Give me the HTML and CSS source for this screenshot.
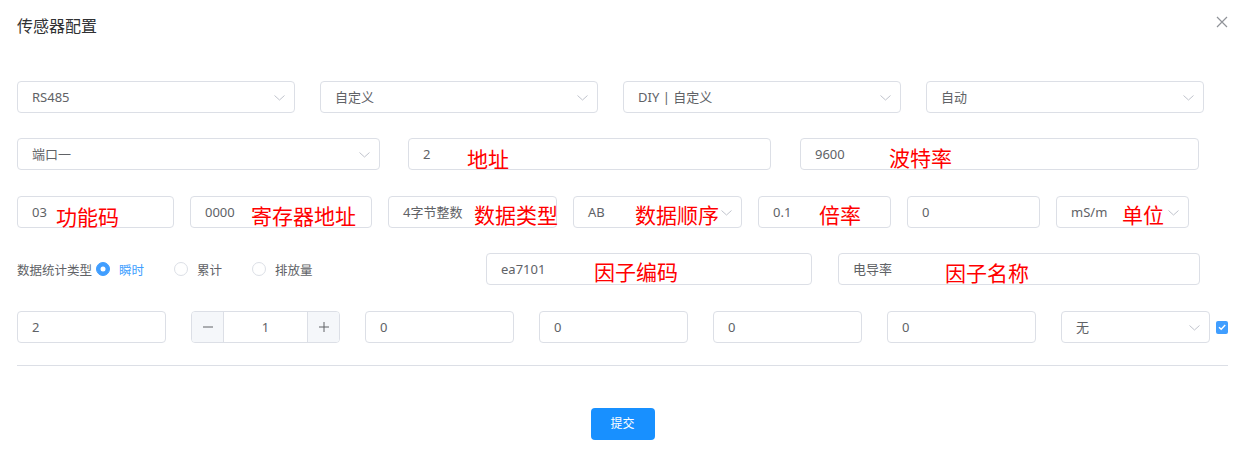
FILE: index.html
```html
<!DOCTYPE html>
<html lang="zh-CN">

<head>
    <meta charset="UTF-8">
    <meta name="viewport" content="width=device-width, initial-scale=1.0">
    <title>传感器配置</title>
    <link rel="stylesheet" href="styles.css">
</head>

<body>
    <div class="dialog">
        <div class="dialog-header">
            <span class="dialog-title">传感器配置</span>
            <span class="dialog-close">
                <svg width="12" height="12" viewBox="0 0 12 12"><path d="M1 1L11 11M11 1L1 11" stroke="#909399" stroke-width="1.2" fill="none"/></svg>
            </span>
        </div>

        <div class="dialog-body">
            <!-- 协议 / 设备 -->
            <div class="row row-1">
                <div class="field select"><span class="field-text">RS485</span><svg class="arrow" viewBox="0 0 11 6"><path d="M0.5 0.5L5.5 5L10.5 0.5"/></svg></div>
                <div class="field select"><span class="field-text">自定义</span><svg class="arrow" viewBox="0 0 11 6"><path d="M0.5 0.5L5.5 5L10.5 0.5"/></svg></div>
                <div class="field select"><span class="field-text">DIY | 自定义</span><svg class="arrow" viewBox="0 0 11 6"><path d="M0.5 0.5L5.5 5L10.5 0.5"/></svg></div>
                <div class="field select"><span class="field-text">自动</span><svg class="arrow" viewBox="0 0 11 6"><path d="M0.5 0.5L5.5 5L10.5 0.5"/></svg></div>
            </div>

            <!-- 端口 地址 波特率 -->
            <div class="row row-2">
                <div class="field select w-port"><span class="field-text">端口一</span><svg class="arrow" viewBox="0 0 11 6"><path d="M0.5 0.5L5.5 5L10.5 0.5"/></svg></div>
                <div class="field w-addr"><span class="field-text">2</span><span class="note n-addr">地址</span></div>
                <div class="field w-baud"><span class="field-text">9600</span><span class="note n-baud">波特率</span></div>
            </div>

            <!-- 功能码 寄存器 ... -->
            <div class="row row-3">
                <div class="field w-func"><span class="field-text">03</span><span class="note n-func">功能码</span></div>
                <div class="field w-reg"><span class="field-text">0000</span><span class="note n-reg">寄存器地址</span></div>
                <div class="field select w-type"><span class="field-text">4字节整数</span><span class="note n-type">数据类型</span></div>
                <div class="field select w-type"><span class="field-text">AB</span><span class="note n-order">数据顺序</span><svg class="arrow" viewBox="0 0 11 6"><path d="M0.5 0.5L5.5 5L10.5 0.5"/></svg></div>
                <div class="field w-sm"><span class="field-text">0.1</span><span class="note n-rate">倍率</span></div>
                <div class="field w-sm"><span class="field-text">0</span></div>
                <div class="field select w-sm"><span class="field-text">mS/m</span><span class="note n-unit">单位</span><svg class="arrow" viewBox="0 0 11 6"><path d="M0.5 0.5L5.5 5L10.5 0.5"/></svg></div>
            </div>

            <!-- 统计类型 因子 -->
            <div class="row row-4">
                <div class="radio-group">
                    <span class="radio-title">数据统计类型</span>
                    <label class="radio checked"><span class="radio-dot"></span><span class="radio-label">瞬时</span></label>
                    <label class="radio"><span class="radio-dot"></span><span class="radio-label">累计</span></label>
                    <label class="radio"><span class="radio-dot"></span><span class="radio-label">排放量</span></label>
                </div>
                <div class="field w-code"><span class="field-text">ea7101</span><span class="note n-code">因子编码</span></div>
                <div class="field w-name"><span class="field-text">电导率</span><span class="note n-name">因子名称</span></div>
            </div>

            <div class="row row-5">
                <div class="field w-num"><span class="field-text">2</span></div>
                <div class="stepper">
                    <span class="step-btn minus">
                        <svg width="12" height="12" viewBox="0 0 12 12"><path d="M1 6H11" stroke="#606266" stroke-width="1"/></svg>
                    </span>
                    <span class="step-value">1</span>
                    <span class="step-btn plus">
                        <svg width="12" height="12" viewBox="0 0 12 12"><path d="M1 6H11M6 1V11" stroke="#606266" stroke-width="1"/></svg>
                    </span>
                </div>
                <div class="field w-num"><span class="field-text">0</span></div>
                <div class="field w-num"><span class="field-text">0</span></div>
                <div class="field w-num"><span class="field-text">0</span></div>
                <div class="field w-num"><span class="field-text">0</span></div>
                <div class="field select w-num"><span class="field-text">无</span><svg class="arrow" viewBox="0 0 11 6"><path d="M0.5 0.5L5.5 5L10.5 0.5"/></svg></div>
                <span class="checkbox">
                    <svg width="10" height="10" viewBox="0 0 10 10"><path d="M2 5.2L4.2 7.3L8.2 3" stroke="#fff" stroke-width="1.4" fill="none"/></svg>
                </span>
            </div>
        </div>

        <div class="divider"></div>

        <div class="dialog-footer">
            <a href="javascript:;" class="btn-primary">提交</a>
        </div>
    </div>
</body>

</html>
```

FILE: styles.css
```css
* {
    margin: 0;
    padding: 0;
    box-sizing: border-box;
}

body {
    background-color: #fff;
    font-family: "Noto Sans", "Noto Sans CJK SC", sans-serif;
    font-size: 13px;
    color: #606266;
}

a {
    text-decoration: none;
}

.dialog {
    width: 1240px;
    height: 452px;
    padding: 0 12px 0 17px;
}

.dialog-header {
    display: flex;
    justify-content: space-between;
    padding-top: 14px;
    height: 81px;
}

.dialog-title {
    font-size: 16px;
    line-height: 24px;
    color: #303133;
}

.dialog-close {
    width: 12px;
    height: 12px;
    margin-top: 2px;
    display: flex;
}

.row {
    display: flex;
    align-items: center;
    height: 32px;
}

.row-1 {
    gap: 25px;
    margin-bottom: 25px;
}

.row-2 {
    margin-bottom: 26px;
}

.row-3 {
    gap: 16px;
    margin-bottom: 25px;
}

.row-4 {
    margin-bottom: 26px;
}

.row-5 {
    gap: 25px;
}

/* 输入框 */
.field {
    position: relative;
    flex: none;
    width: 278px;
    height: 32px;
    border: 1px solid #dcdfe6;
    border-radius: 4px;
    display: flex;
    align-items: center;
    padding: 0 14px;
    background-color: #fff;
    line-height: 30px;
    white-space: nowrap;
}

.field-text {
    color: #606266;
}

.arrow {
    position: absolute;
    right: 9px;
    top: 13px;
    width: 11px;
    height: 6px;
    fill: none;
    stroke: #c0c4cc;
    stroke-width: 1;
}

.w-port { width: 363px; }
.w-addr { width: 363px; margin-left: 28px; }
.w-baud { width: 399px; margin-left: 29px; }

.w-func { width: 157px; }
.w-reg { width: 182px; }
.w-type { width: 169px; }
.w-sm { width: 133px; }

.w-code { width: 326px; margin-left: auto; }
.w-name { width: 362px; margin-left: 26px; margin-right: 28px; }

.w-num { width: 149px; }

/* 红色标注 */
.note {
    position: absolute;
    font-size: 21px;
    line-height: 21px;
    color: #ff0000;
    top: 8px;
}

.n-addr { left: 58px; top: 10px; }
.n-baud { left: 88px; top: 9px; }
.n-func { left: 38px; top: 10px; }
.n-reg { left: 60px; top: 9px; }
.n-type { left: 85px; }
.n-order { left: 61px; }
.n-rate { left: 60px; }
.n-unit { left: 65px; }
.n-code { left: 107px; }
.n-name { left: 106px; top: 9px; }

/* 单选 */
.radio-group {
    display: flex;
    align-items: center;
    font-size: 12.5px;
}

.radio-title {
    color: #606266;
    margin-right: 4px;
}

.radio {
    display: flex;
    align-items: center;
    margin-right: 30px;
    cursor: pointer;
}

.radio-dot {
    width: 14px;
    height: 14px;
    border-radius: 50%;
    border: 1px solid #dcdfe6;
    background-color: #fff;
    position: relative;
}

.radio-label {
    padding-left: 9px;
    color: #606266;
}

.radio.checked .radio-dot {
    border-color: #409eff;
    background-color: #409eff;
}

.radio.checked .radio-dot::after {
    content: "";
    position: absolute;
    width: 5px;
    height: 5px;
    border-radius: 50%;
    background-color: #fff;
    top: 50%;
    left: 50%;
    transform: translate(-50%, -50%);
}

.radio.checked .radio-label {
    color: #409eff;
}

/* 计数器 */
.stepper {
    flex: none;
    width: 149px;
    height: 32px;
    border: 1px solid #dcdfe6;
    border-radius: 4px;
    display: flex;
    overflow: hidden;
}

.step-btn {
    width: 32px;
    background-color: #f5f7fa;
    display: flex;
    align-items: center;
    justify-content: center;
}

.step-btn.minus {
    border-right: 1px solid #dcdfe6;
}

.step-btn.plus {
    border-left: 1px solid #dcdfe6;
}

.step-value {
    flex: 1;
    text-align: center;
    line-height: 30px;
}

.checkbox {
    width: 13px;
    height: 13px;
    border-radius: 2px;
    background-color: #409eff;
    display: flex;
    align-items: center;
    justify-content: center;
    margin-left: -19px;
}

.divider {
    height: 1px;
    background-color: #dcdfe6;
    margin-top: 22px;
}

.dialog-footer {
    display: flex;
    justify-content: center;
    padding-top: 42px;
}

.btn-primary {
    width: 64px;
    height: 32px;
    line-height: 32px;
    text-align: center;
    border-radius: 4px;
    background-color: #1890ff;
    color: #fff;
    font-size: 12px;
}
```
